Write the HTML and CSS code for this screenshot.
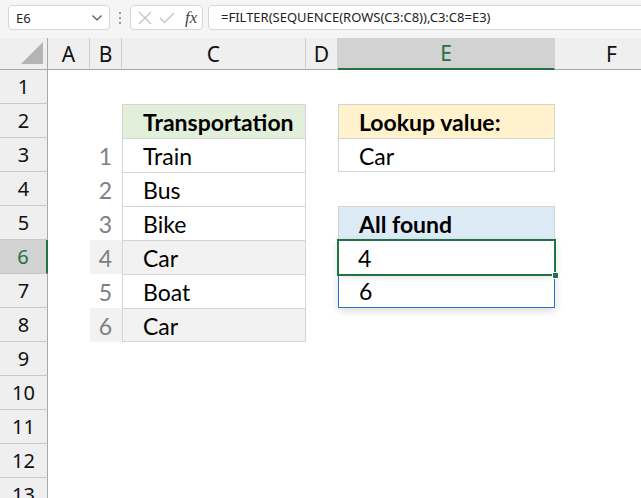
FILE: index.html
```html
<!DOCTYPE html>
<html>
<head>
<meta charset="utf-8">
<link rel="stylesheet" href="styles.css">
</head>
<body>
<div class="topbar">
  <div class="namebox"><span>E6</span>
    <svg class="chev" width="12" height="8" viewBox="0 0 12 8"><path d="M1.5 1.5 L6 6 L10.5 1.5" fill="none" stroke="#555" stroke-width="1.2"/></svg>
  </div>
  <div class="dots"><i></i><i></i><i></i></div>
  <div class="fxbox">
    <svg width="14" height="14" viewBox="0 0 14 14"><path d="M1 1 L13 13 M13 1 L1 13" stroke="#c4c4c4" stroke-width="1.3" fill="none"/></svg>
    <svg width="16" height="12" viewBox="0 0 16 12"><path d="M1 6 L5.5 10.5 L15 1" stroke="#c4c4c4" stroke-width="1.3" fill="none"/></svg>
    <span class="fx">fx</span>
  </div>
  <div class="formula">=FILTER(SEQUENCE(ROWS(C3:C8)),C3:C8=E3)</div>
</div>

<div class="sheet">
  <div class="corner"><svg width="48" height="32" viewBox="0 0 48 32"><polygon points="43,4 43,26 21,26" fill="#b4b4b4"/></svg></div>
  <div class="ch">A</div>
  <div class="ch">B</div>
  <div class="ch">C</div>
  <div class="ch">D</div>
  <div class="ch sel">E</div>
  <div class="ch">F</div>

  <div class="rh">1</div><div></div><div></div><div></div><div></div><div></div><div></div>

  <div class="rh">2</div><div></div><div></div>
  <div class="c t hdr green">Transportation</div><div></div>
  <div class="c t hdr yellow">Lookup value:</div><div></div>

  <div class="rh">3</div><div></div><div class="n">1</div>
  <div class="c t">Train</div><div></div>
  <div class="c t last">Car</div><div></div>

  <div class="rh">4</div><div></div><div class="n">2</div>
  <div class="c t">Bus</div><div></div><div></div><div></div>

  <div class="rh">5</div><div></div><div class="n">3</div>
  <div class="c t">Bike</div><div></div>
  <div class="c t hdr blue">All found</div><div></div>

  <div class="rh rsel">6</div><div></div><div class="n shade">4</div>
  <div class="c t shade">Car</div><div></div>
  <div class="c active">4<span class="handle"></span></div><div></div>

  <div class="rh">7</div><div></div><div class="n">5</div>
  <div class="c t">Boat</div><div></div>
  <div class="c spill">6</div><div></div>

  <div class="rh">8</div><div></div><div class="n shade">6</div>
  <div class="c t shade last">Car</div><div></div><div></div><div></div>

  <div class="rh">9</div><div></div><div></div><div></div><div></div><div></div><div></div>
  <div class="rh">10</div><div></div><div></div><div></div><div></div><div></div><div></div>
  <div class="rh">11</div><div></div><div></div><div></div><div></div><div></div><div></div>
  <div class="rh">12</div><div></div><div></div><div></div><div></div><div></div><div></div>
  <div class="rh">13</div><div></div><div></div><div></div><div></div><div></div><div></div>
</div>
</body>
</html>
```

FILE: styles.css
```css
html, body {
  margin: 0;
  padding: 0;
}
body {
  width: 641px;
  height: 498px;
  overflow: hidden;
  background: #fff;
  font-family: "Lato", "Liberation Sans", sans-serif;
  color: #000;
}
.topbar {
  display: flex;
  align-items: flex-start;
  height: 38px;
  box-sizing: border-box;
  padding: 5px 0 0 8px;
  background: #f5f5f5;
  font-family: "Noto Sans", sans-serif;
}
.namebox {
  width: 102px;
  height: 25px;
  box-sizing: border-box;
  border: 1px solid #d6d6d6;
  border-radius: 4px;
  background: #fff;
  display: flex;
  align-items: center;
  justify-content: space-between;
  padding: 0 6px 0 7px;
  font-size: 13px;
  color: #222;
}
.dots {
  width: 20px;
  height: 25px;
  display: flex;
  flex-direction: column;
  align-items: center;
  justify-content: center;
  gap: 3px;
}
.dots i {
  display: block;
  width: 2px;
  height: 2px;
  background: #9a9a9a;
}
.fxbox {
  width: 73px;
  height: 25px;
  box-sizing: border-box;
  border: 1px solid #d6d6d6;
  border-radius: 4px;
  background: #fff;
  display: flex;
  align-items: center;
  gap: 7px;
  padding-left: 7px;
}
.fx {
  font-family: "Liberation Serif", serif;
  font-style: italic;
  font-size: 17px;
  color: #444;
  margin-left: 3px;
}
.formula {
  flex: 1;
  margin-left: 5px;
  margin-right: -10px;
  height: 25px;
  box-sizing: border-box;
  border: 1px solid #d6d6d6;
  border-radius: 4px;
  background: #fff;
  padding-left: 12px;
  font-size: 13px;
  line-height: 23px;
  color: #222;
  white-space: nowrap;
}
.sheet {
  display: grid;
  grid-template-columns: 48px 42px 32px 184px 32px 217px 114px;
  grid-template-rows: 32px;
  grid-auto-rows: 34px;
  width: 669px;
}
.corner {
  background: #efefef;
  border-bottom: 1px solid #a8a8a8;
  border-right: 1px solid #a8a8a8;
  box-sizing: border-box;
}
.corner svg { display: block; }
.ch {
  background: #efefef;
  border-bottom: 1px solid #a8a8a8;
  border-right: 1px solid #d0d0d0;
  box-sizing: border-box;
  display: flex;
  align-items: center;
  justify-content: center;
  font-family: "Noto Sans", sans-serif;
  font-size: 21px;
  color: #111;
}
.ch.sel {
  background: #d2d2d2;
  color: #217346;
  border-bottom: 2px solid #217346;
}
.rh {
  background: #efefef;
  border-right: 1px solid #a8a8a8;
  border-bottom: 1px solid #c8c8c8;
  box-sizing: border-box;
  display: flex;
  align-items: center;
  justify-content: center;
  font-family: "Noto Sans", sans-serif;
  font-size: 20px;
  color: #111;
}
.rh.rsel {
  background: #d2d2d2;
  color: #217346;
  border-right: 2px solid #217346;
}
.c {
  display: flex;
  align-items: center;
  padding-left: 20px;
  padding-top: 1px;
  box-sizing: border-box;
  font-size: 23px;
  white-space: nowrap;
}
.n {
  display: flex;
  align-items: center;
  justify-content: flex-end;
  padding-right: 10px;
  padding-top: 1px;
  box-sizing: border-box;
  font-size: 23px;
  color: #808080;
}
.t {
  border-left: 1px solid #d4d4d4;
  border-right: 1px solid #d4d4d4;
  border-top: 1px solid #d4d4d4;
}
.t.last {
  border-bottom: 1px solid #d4d4d4;
}
.hdr { font-weight: 700; }
.green { background: #e2efda; }
.yellow { background: #fff2cc; }
.blue { background: #ddebf7; }
.shade { background: #f2f2f2; }
.active {
  position: relative;
  background: #fff;
  box-shadow: 0 2px 8px rgba(0, 0, 0, 0.14);
}
.active::after {
  content: "";
  position: absolute;
  left: -1px;
  right: -1px;
  top: -1px;
  bottom: -2px;
  border: 2px solid #217346;
  pointer-events: none;
  z-index: 2;
}
.handle {
  position: absolute;
  right: -4px;
  bottom: -5px;
  width: 5px;
  height: 5px;
  background: #217346;
  border: 1px solid #fff;
  z-index: 3;
}
.spill {
  background: #fff;
  border: 1px solid #2f6fd2;
  border-top: none;
  box-shadow: 0 3px 8px rgba(0, 0, 0, 0.14);
}
```
